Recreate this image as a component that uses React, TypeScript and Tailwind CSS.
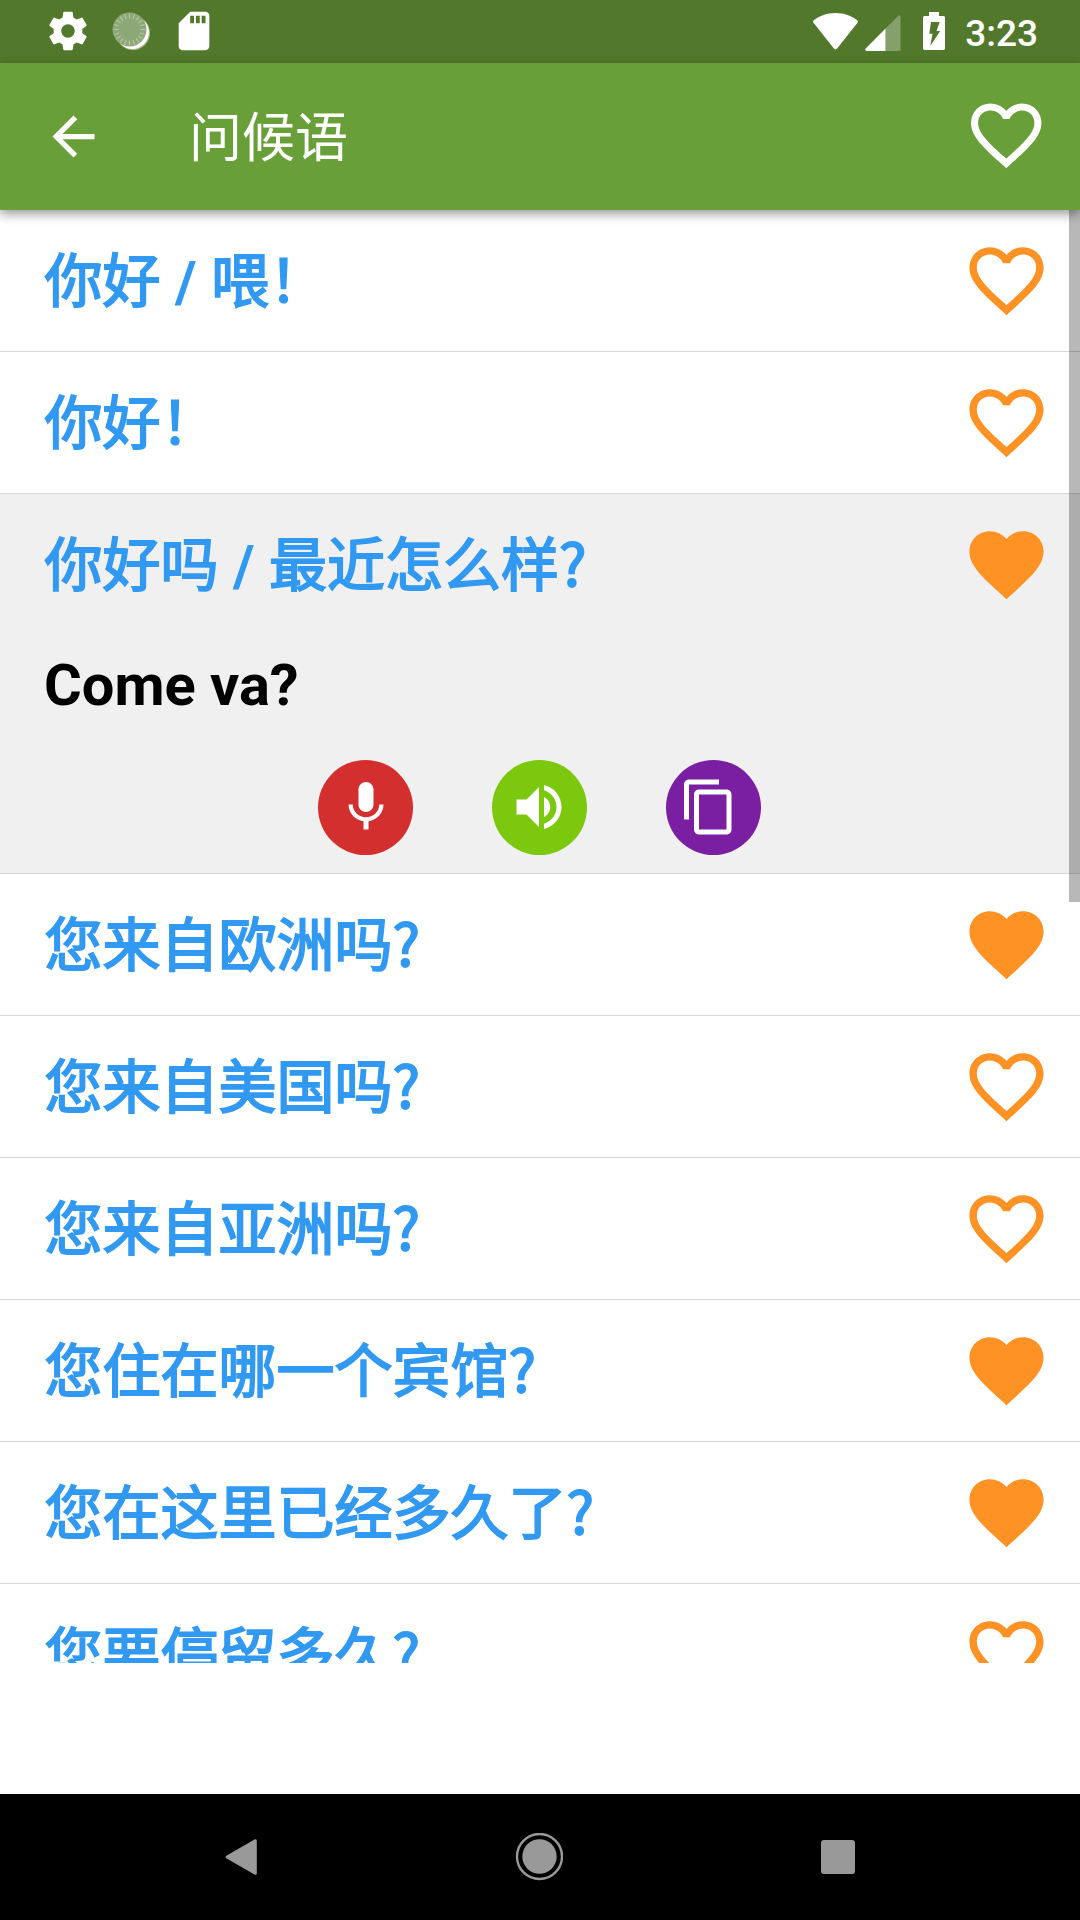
import React from 'react';
import {
  MdArrowBack,
  MdContentCopy,
  MdFavorite,
  MdFavoriteBorder,
  MdMic,
  MdSdCard,
} from 'react-icons/md';

interface Phrase {
  id: number;
  text: string;
  favorite: boolean;
  translation?: string;
}

const phrases: Phrase[] = [
  { id: 1, text: '你好 / 喂！', favorite: false },
  { id: 2, text: '你好！', favorite: false },
  { id: 3, text: '你好吗 / 最近怎么样?', favorite: true, translation: 'Come va?' },
  { id: 4, text: '您来自欧洲吗?', favorite: true },
  { id: 5, text: '您来自美国吗?', favorite: false },
  { id: 6, text: '您来自亚洲吗?', favorite: false },
  { id: 7, text: '您住在哪一个宾馆?', favorite: true },
  { id: 8, text: '您在这里已经多久了?', favorite: true },
  { id: 9, text: '您要停留多久?', favorite: false },
];

const spokes = Array.from({ length: 20 }, (_, i) => i * 18);

const StatusBar: React.FC = () => (
  <div className="flex h-[63px] shrink-0 items-center justify-between bg-[#52782c] pl-[45px] pr-[42px] text-white">
    <div className="mb-px flex items-center gap-[17px]">
      <svg className="h-[46px] w-[46px]" viewBox="0 0 24 24" fill="currentColor">
        <path d="M19.43 12.98c.04-.32.07-.64.07-.98s-.03-.66-.07-.98l2.11-1.65c.19-.15.24-.42.12-.64l-2-3.46c-.12-.22-.39-.3-.61-.22l-2.49 1c-.52-.4-1.08-.73-1.69-.98l-.38-2.65C14.46 2.18 14.25 2 14 2h-4c-.25 0-.46.18-.49.42l-.38 2.65c-.61.25-1.17.59-1.69.98l-2.49-1c-.23-.09-.49 0-.61.22l-2 3.46c-.13.22-.07.49.12.64l2.11 1.65c-.04.32-.07.65-.07.98s.03.66.07.98l-2.11 1.65c-.19.15-.24.42-.12.64l2 3.46c.12.22.39.3.61.22l2.49-1c.52.4 1.08.73 1.69.98l.38 2.65c.03.24.24.42.49.42h4c.25 0 .46-.18.49-.42l.38-2.65c.61-.25 1.17-.59 1.69-.98l2.49 1c.23.09.49 0 .61-.22l2-3.46c.12-.22.07-.49-.12-.64l-2.11-1.65zM12 15.5c-1.93 0-3.5-1.57-3.5-3.5s1.57-3.5 3.5-3.5 3.5 1.57 3.5 3.5-1.57 3.5-3.5 3.5z" />
      </svg>
      <svg className="h-[46px] w-[46px]" viewBox="0 0 46 46">
        <circle cx="25" cy="25" r="17" fill="#a9bf94" />
        <circle cx="24.3" cy="24.3" r="16.6" fill="#fff" />
        <circle cx="21.5" cy="21.5" r="17" fill="#8ea777" />
        {spokes.map((angle) => (
          <line
            key={angle}
            x1="21.5"
            y1="5.5"
            x2="21.5"
            y2="10.5"
            stroke="#b5c6a5"
            strokeWidth="1.1"
            transform={`rotate(${angle} 21.5 21.5)`}
          />
        ))}
      </svg>
      <MdSdCard className="h-[46px] w-[46px]" />
    </div>
    <div className="flex items-center">
      <svg className="h-[37px] w-[45px]" viewBox="0 0 45 37" fill="currentColor">
        <path d="M22.5 0C14 0 6.5 2.8.8 7.2c-.9.7-1 1.7-.3 2.6L20.9 35.6c.9 1.1 2.3 1.1 3.2 0L44.5 9.8c.7-.9.6-1.9-.3-2.6C38.5 2.8 31 0 22.5 0z" />
      </svg>
      <svg className="mt-[2px] ml-[7px] h-[36px] w-[36px]" viewBox="0 0 36 36" fill="currentColor">
        <path d="M20.5 13.5V36H34a1.5 1.5 0 0 0 1.5-1.5V2c0-1.4-1.3-2-2.3-1z" opacity=".3" />
        <path d="M20.5 13.5V36H1.8C.3 36-.3 34.5.7 33.5z" />
      </svg>
      <svg className="mb-px ml-[22px] h-[38px] w-[22px]" viewBox="0 0 22 38" fill="currentColor">
        <path
          fillRule="evenodd"
          d="M6 0h10v4h4.3c1 0 1.7.7 1.7 1.7v30.6c0 1-.7 1.7-1.7 1.7H1.7C.7 38 0 37.3 0 36.3V5.7C0 4.7.7 4 1.7 4H6zM8 10h8.7l-3.2 9h3.7L7.3 34l2.2-12.3H6.3z"
        />
      </svg>
      <span className="mt-[3px] ml-[20px] font-['Roboto',sans-serif] text-[37px] leading-none font-medium">
        3:23
      </span>
    </div>
  </div>
);

const Header: React.FC = () => (
  <header className="relative z-20 flex h-[147px] shrink-0 items-center bg-[#689f38] pr-[32px] pl-[42px] text-white shadow-[0_4px_10px_rgba(0,0,0,0.4)]">
    <MdArrowBack className="h-[63px] w-[63px]" />
    <h1 className="mb-[4px] ml-[84px] flex-1 font-['Noto_Sans_CJK_SC',sans-serif] text-[53px] leading-none">
      问候语
    </h1>
    <MdFavoriteBorder className="mb-[2px] h-[84.5px] w-[84.5px]" />
  </header>
);

const PhraseActions: React.FC = () => (
  <div className="flex justify-center gap-[79px] pr-px pb-[18px] text-white">
    <button className="flex h-[95px] w-[95px] items-center justify-center rounded-full bg-[#d32f2f] pb-px">
      <MdMic className="h-[60px] w-[60px]" />
    </button>
    <button className="flex h-[95px] w-[95px] items-center justify-center rounded-full bg-[#7cc80e] pr-px pb-px">
      <svg className="h-[60px] w-[60px]" viewBox="0 0 24 24" fill="currentColor">
        <path d="M3 9v6h4l5 5V4L7 9H3zm13.5 3c0-1.77-1.02-3.29-2.5-4.03v8.05c1.48-.73 2.5-2.25 2.5-4.02zM14 3.23v2.06c2.89.86 5 3.54 5 6.71s-2.11 5.85-5 6.71v2.06c4.01-.91 7-4.49 7-8.77s-2.99-7.86-7-8.77z" />
      </svg>
    </button>
    <button className="flex h-[95px] w-[95px] items-center justify-center rounded-full bg-[#7b1fa2] pr-[10px] pb-px">
      <MdContentCopy className="h-[60px] w-[60px]" />
    </button>
  </div>
);

// The separator is set in Roboto Bold, the Chinese parts in a thickened regular face
const PhraseText: React.FC<{ text: string }> = ({ text }) => {
  const [first, second] = text.split(' / ');

  return (
    <span className="mb-[7px] font-['Noto_Sans_CJK_SC',sans-serif] text-[58px] leading-none whitespace-pre text-[#3199f2] [-webkit-text-stroke:1.8px_#3199f2]">
      {first}
      {second && (
        <>
          <span className="font-['Roboto',sans-serif] leading-[0] font-bold [-webkit-text-stroke:0px]">
            {' / '}
          </span>
          {second}
        </>
      )}
    </span>
  );
};

const PhraseRow: React.FC<{ phrase: Phrase }> = ({ phrase }) => {
  const Heart = phrase.favorite ? MdFavorite : MdFavoriteBorder;
  const expanded = Boolean(phrase.translation);

  return (
    <li className={`border-b border-[#d6d6d6] ${expanded ? 'bg-[#f0f0f0]' : 'bg-white'}`}>
      <div className="flex h-[141px] items-center justify-between pr-[29px] pl-[44.6px]">
        <PhraseText text={phrase.text} />
        <Heart className="h-[89px] w-[89px] text-[#ff9224]" />
      </div>
      {expanded && (
        <>
          <p className="h-[125px] pt-[7px] pl-[44px] font-['Roboto',sans-serif] text-[57.8px] font-bold text-black">
            {phrase.translation}
          </p>
          <PhraseActions />
        </>
      )}
    </li>
  );
};

const NavigationBar: React.FC = () => (
  <nav className="flex h-[126px] shrink-0 items-center justify-between bg-black pr-[225px] pl-[225px] text-[#999]">
    <svg className="h-[36px] w-[32px]" viewBox="0 0 32 36" fill="currentColor">
      <path d="M29.5.5c1-.7 2.3-.2 2.3 1.3v32.4c0 1.5-1.3 2-2.3 1.3L1.3 19.3c-1-.7-1-1.9 0-2.6z" />
    </svg>
    <svg className="h-[48px] w-[48px]" viewBox="0 0 48 48">
      <circle cx="24.5" cy="23.5" r="22.5" fill="none" stroke="currentColor" strokeWidth="2.4" />
      <circle cx="24.5" cy="23.5" r="17.2" fill="currentColor" />
    </svg>
    <span className="h-[34px] w-[34px] rounded-[3px] bg-[#999]" />
  </nav>
);

export default function App() {
  return (
    <div className="flex h-[1920px] w-[1080px] flex-col overflow-hidden bg-white">
      <StatusBar />
      <Header />
      <main className="relative h-[1453px] shrink-0 overflow-hidden">
        <ul>
          {phrases.map((phrase) => (
            <PhraseRow key={phrase.id} phrase={phrase} />
          ))}
        </ul>
        {/* Scroll indicator */}
        <div className="absolute top-0 right-0 h-[692px] w-[11px] bg-black/28" />
      </main>
      <div className="flex-1" />
      <NavigationBar />
    </div>
  );
}
